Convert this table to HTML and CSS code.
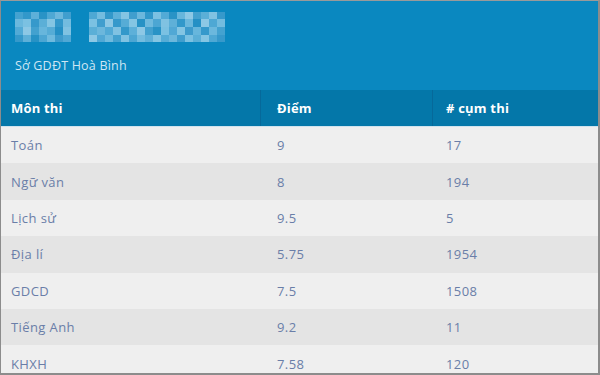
FILE: index.html
```html
<!DOCTYPE html>
<html lang="vi">
<head>
<meta charset="utf-8">
<link rel="stylesheet" href="styles.css">
</head>
<body>
<div class="frame">
  <header class="banner">
    <svg class="blur" width="216" height="30" viewBox="0 0 216 30">
      <g>
        <rect x="0" y="0" width="8" height="7" fill="#4fa7d3"/><rect x="8" y="0" width="8" height="7" fill="#3a9bcc"/><rect x="16" y="0" width="8" height="7" fill="#6cb8de"/><rect x="24" y="0" width="8" height="7" fill="#2f95c8"/><rect x="32" y="0" width="8" height="7" fill="#5aaed8"/><rect x="40" y="0" width="8" height="7" fill="#7ec0e2"/><rect x="48" y="0" width="8" height="7" fill="#4aa3d1"/>
        <rect x="0" y="7" width="8" height="8" fill="#7cc1e3"/><rect x="8" y="7" width="8" height="8" fill="#8fcbe8"/><rect x="16" y="7" width="8" height="8" fill="#3e9dcd"/><rect x="24" y="7" width="8" height="8" fill="#6ab6dc"/><rect x="32" y="7" width="8" height="8" fill="#9ad0ea"/><rect x="40" y="7" width="8" height="8" fill="#3b9bcc"/><rect x="48" y="7" width="8" height="8" fill="#86c6e5"/>
        <rect x="0" y="15" width="8" height="8" fill="#5fb0da"/><rect x="8" y="15" width="8" height="8" fill="#a4d4ec"/><rect x="16" y="15" width="8" height="8" fill="#4ea6d2"/><rect x="24" y="15" width="8" height="8" fill="#78bfe1"/><rect x="32" y="15" width="8" height="8" fill="#64b3db"/><rect x="40" y="15" width="8" height="8" fill="#2a92c6"/><rect x="48" y="15" width="8" height="8" fill="#95cde9"/>
        <rect x="0" y="23" width="8" height="7" fill="#3d9dcd"/><rect x="8" y="23" width="8" height="7" fill="#6db7dd"/><rect x="16" y="23" width="8" height="7" fill="#2d94c7"/><rect x="24" y="23" width="8" height="7" fill="#58acd7"/><rect x="32" y="23" width="8" height="7" fill="#81c3e4"/><rect x="40" y="23" width="8" height="7" fill="#489fcf"/><rect x="48" y="23" width="8" height="7" fill="#5eaed9"/>
      </g>
      <g transform="translate(74 0)">
        <rect x="0" y="0" width="8" height="7" fill="#5aaed8"/><rect x="8" y="0" width="8" height="7" fill="#86c6e5"/><rect x="16" y="0" width="8" height="7" fill="#3b9bcc"/><rect x="24" y="0" width="8" height="7" fill="#6cb8de"/><rect x="32" y="0" width="8" height="7" fill="#9ad0ea"/><rect x="40" y="0" width="8" height="7" fill="#4aa3d1"/><rect x="48" y="0" width="8" height="7" fill="#7ec0e2"/><rect x="56" y="0" width="8" height="7" fill="#3a9bcc"/><rect x="64" y="0" width="8" height="7" fill="#8fcbe8"/><rect x="72" y="0" width="8" height="7" fill="#5fb0da"/><rect x="80" y="0" width="8" height="7" fill="#2f95c8"/><rect x="88" y="0" width="8" height="7" fill="#78bfe1"/><rect x="96" y="0" width="8" height="7" fill="#a4d4ec"/><rect x="104" y="0" width="8" height="7" fill="#4ea6d2"/><rect x="112" y="0" width="8" height="7" fill="#6ab6dc"/><rect x="120" y="0" width="8" height="7" fill="#95cde9"/><rect x="128" y="0" width="8" height="7" fill="#3e9dcd"/>
        <rect x="0" y="7" width="8" height="8" fill="#8fcbe8"/><rect x="8" y="7" width="8" height="8" fill="#4aa3d1"/><rect x="16" y="7" width="8" height="8" fill="#a4d4ec"/><rect x="24" y="7" width="8" height="8" fill="#3e9dcd"/><rect x="32" y="7" width="8" height="8" fill="#64b3db"/><rect x="40" y="7" width="8" height="8" fill="#9ad0ea"/><rect x="48" y="7" width="8" height="8" fill="#2d94c7"/><rect x="56" y="7" width="8" height="8" fill="#81c3e4"/><rect x="64" y="7" width="8" height="8" fill="#58acd7"/><rect x="72" y="7" width="8" height="8" fill="#95cde9"/><rect x="80" y="7" width="8" height="8" fill="#6db7dd"/><rect x="88" y="7" width="8" height="8" fill="#3a9bcc"/><rect x="96" y="7" width="8" height="8" fill="#7cc1e3"/><rect x="104" y="7" width="8" height="8" fill="#2a92c6"/><rect x="112" y="7" width="8" height="8" fill="#a4d4ec"/><rect x="120" y="7" width="8" height="8" fill="#5aaed8"/><rect x="128" y="7" width="8" height="8" fill="#86c6e5"/>
        <rect x="0" y="15" width="8" height="8" fill="#6ab6dc"/><rect x="8" y="15" width="8" height="8" fill="#7ec0e2"/><rect x="16" y="15" width="8" height="8" fill="#5fb0da"/><rect x="24" y="15" width="8" height="8" fill="#95cde9"/><rect x="32" y="15" width="8" height="8" fill="#3b9bcc"/><rect x="40" y="15" width="8" height="8" fill="#6cb8de"/><rect x="48" y="15" width="8" height="8" fill="#a4d4ec"/><rect x="56" y="15" width="8" height="8" fill="#4ea6d2"/><rect x="64" y="15" width="8" height="8" fill="#2f95c8"/><rect x="72" y="15" width="8" height="8" fill="#8fcbe8"/><rect x="80" y="15" width="8" height="8" fill="#5eaed9"/><rect x="88" y="15" width="8" height="8" fill="#9ad0ea"/><rect x="96" y="15" width="8" height="8" fill="#489fcf"/><rect x="104" y="15" width="8" height="8" fill="#78bfe1"/><rect x="112" y="15" width="8" height="8" fill="#3d9dcd"/><rect x="120" y="15" width="8" height="8" fill="#7cc1e3"/><rect x="128" y="15" width="8" height="8" fill="#4fa7d3"/>
        <rect x="0" y="23" width="8" height="7" fill="#a4d4ec"/><rect x="8" y="23" width="8" height="7" fill="#5eaed9"/><rect x="16" y="23" width="8" height="7" fill="#81c3e4"/><rect x="24" y="23" width="8" height="7" fill="#4ea6d2"/><rect x="32" y="23" width="8" height="7" fill="#95cde9"/><rect x="40" y="23" width="8" height="7" fill="#58acd7"/><rect x="48" y="23" width="8" height="7" fill="#86c6e5"/><rect x="56" y="23" width="8" height="7" fill="#6db7dd"/><rect x="64" y="23" width="8" height="7" fill="#9ad0ea"/><rect x="72" y="23" width="8" height="7" fill="#64b3db"/><rect x="80" y="23" width="8" height="7" fill="#7ec0e2"/><rect x="88" y="23" width="8" height="7" fill="#4aa3d1"/><rect x="96" y="23" width="8" height="7" fill="#8fcbe8"/><rect x="104" y="23" width="8" height="7" fill="#6ab6dc"/><rect x="112" y="23" width="8" height="7" fill="#9ad0ea"/><rect x="120" y="23" width="8" height="7" fill="#5aaed8"/><rect x="128" y="23" width="8" height="7" fill="#3e9dcd"/>
      </g>
    </svg>
    <div class="sub">Sở GDĐT Hoà Bình</div>
  </header>
  <div class="table">
    <div class="row head"><div class="c">Môn thi</div><div class="c">Điểm</div><div class="c">#&nbsp;cụm thi</div></div>
    <div class="row"><div class="c">Toán</div><div class="c">9</div><div class="c">17</div></div>
    <div class="row"><div class="c">Ngữ văn</div><div class="c">8</div><div class="c">194</div></div>
    <div class="row"><div class="c">Lịch sử</div><div class="c">9.5</div><div class="c">5</div></div>
    <div class="row"><div class="c">Địa lí</div><div class="c">5.75</div><div class="c">1954</div></div>
    <div class="row"><div class="c">GDCD</div><div class="c">7.5</div><div class="c">1508</div></div>
    <div class="row"><div class="c">Tiếng Anh</div><div class="c">9.2</div><div class="c">11</div></div>
    <div class="row"><div class="c">KHXH</div><div class="c">7.58</div><div class="c">120</div></div>
  </div>
</div>
</body>
</html>
```
FILE: styles.css
```css
html, body {
  margin: 0;
  padding: 0;
  width: 600px;
  height: 375px;
  overflow: hidden;
  background: #8c8c8c;
}
body {
  font-family: "Open Sans", "Liberation Sans", sans-serif;
}
.frame {
  box-sizing: border-box;
  width: 600px;
  height: 375px;
  border-top: 1px solid #9a9a9a;
  border-left: 1px solid #8c8c8c;
  border-right: 2px solid #8c8c8c;
  border-bottom: 2px solid #8c8c8c;
  background: #efefef;
  overflow: hidden;
  display: flex;
  flex-direction: column;
}
.banner {
  flex-shrink: 0;
  background: #0a88c0;
  height: 89px;
  box-sizing: border-box;
  padding: 11px 0 0 14px;
  display: flex;
  flex-direction: column;
}
.blur {
  display: block;
  opacity: 0.85;
}
.sub {
  margin-top: 16px;
  color: #cfe6f3;
  font-size: 12.5px;
  line-height: 16px;
  letter-spacing: 0.2px;
}
.table {
  flex-shrink: 0;
  display: flex;
  flex-direction: column;
}
.row {
  flex-shrink: 0;
  display: grid;
  grid-template-columns: 259px 172px 1fr;
  height: 36.4px;
  align-items: center;
  color: #6a7ea8;
  font-size: 13px;
  letter-spacing: 0.4px;
  background: #efefef;
}
.row:nth-child(odd) {
  background: #e4e4e4;
}
.row.head {
  background: #0477a9;
  color: #ffffff;
  font-weight: 700;
  letter-spacing: 0.2px;
  height: 36px;
  align-items: stretch;
  border-bottom: 1px solid #cfe3ee;
}
.row.head .c {
  display: flex;
  align-items: center;
}
.row.head .c + .c {
  border-left: 1px solid #06699a;
}
.c {
  padding-left: 10px;
}
.row .c:nth-child(2) {
  padding-left: 17px;
}
.row .c:nth-child(3) {
  padding-left: 14px;
}
.row.head .c:nth-child(2) {
  padding-left: 16px;
}
.row.head .c:nth-child(3) {
  padding-left: 13px;
}
```
